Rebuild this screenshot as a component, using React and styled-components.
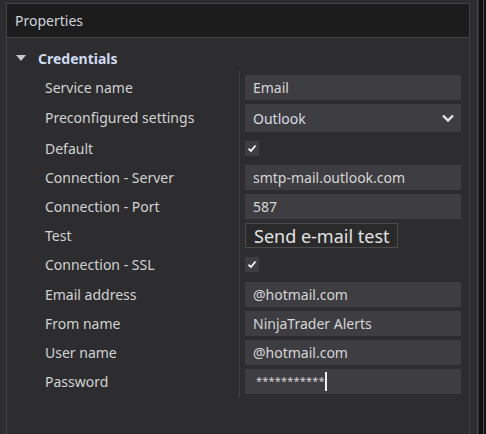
import React from "react";
import styled, { createGlobalStyle } from "styled-components";

const GlobalStyle = createGlobalStyle`
  html, body {
    margin: 0;
    padding: 0;
    background: #2d2d30;
  }
  * {
    box-sizing: border-box;
  }
`;

const Screen = styled.div`
  display: flex;
  width: 486px;
  height: 434px;
  padding-left: 6px;
  background: #2d2d30;
  font-family: "Noto Sans", "Open Sans", sans-serif;
  overflow: hidden;
`;

const Panel = styled.section`
  flex: 0 0 464px;
  margin-top: 3px;
  border: 1px solid #434346;
  border-bottom: none;
  background: #2d2d30;
`;

const PanelHeader = styled.header`
  height: 34px;
  padding-left: 8px;
  display: flex;
  align-items: center;
  background: #1c1c1d;
  border-bottom: 1px solid #434346;
  color: #cfd5de;
  font-size: 14px;
`;

const Section = styled.div`
  display: flex;
  align-items: center;
  gap: 12px;
  height: 20px;
  margin: 10px 0 7px;
  padding-left: 9px;
  color: #cfdaf0;
  font-size: 14px;
  font-weight: 700;
`;

const Triangle = styled.span`
  width: 0;
  height: 0;
  border-left: 5px solid transparent;
  border-right: 5px solid transparent;
  border-top: 6px solid #c8c8c8;
`;

const Grid = styled.div`
  display: grid;
  grid-template-columns: 232px 1fr;
  padding-top: 4px;
  margin-top: -4px;
  background: linear-gradient(#3f3f44, #3f3f44) 232px 0 / 1px 100% no-repeat;
`;

const Label = styled.div`
  height: ${(p) => p.$h}px;
  padding-left: 38px;
  line-height: ${(p) => (p.$tall ? 28 : 25)}px;
  color: #d2d2d2;
  font-size: 14px;
  white-space: nowrap;
`;

const Value = styled.div`
  height: ${(p) => p.$h}px;
  padding-left: 6px;
  display: flex;
  align-items: flex-start;
`;

const Input = styled.div`
  width: 216px;
  height: 25px;
  padding-left: 8px;
  display: flex;
  align-items: center;
  background: #3e3d42;
  color: #d6d6d6;
  font-size: 14px;
`;

const Select = styled(Input)`
  height: 28px;
  justify-content: space-between;
  padding-right: 6px;
  color: #d8dce4;
`;

const Check = styled.div`
  width: 14px;
  height: 15px;
  margin-top: 5px;
  display: flex;
  align-items: center;
  justify-content: center;
  background: #3e3d42;
`;

const Button = styled.div`
  height: 25px;
  padding: 0 7px 0 8px;
  display: flex;
  align-items: center;
  background: #2a2a2b;
  border: 1px solid #4b4b4e;
  color: #e2e2e2;
  font-size: 18px;
`;

const Stars = styled.span`
  margin-left: 3px;
  margin-top: -3px;
  font-size: 11px;
  letter-spacing: 0.2px;
  color: #d6d6d6;
`;

const Caret = styled.span`
  width: 2px;
  height: 19px;
  background: #f0f0f0;
`;

const Gutter = styled.div`
  flex: 0 0 7px;
`;

const EdgeLine = styled.div`
  flex: 0 0 ${(p) => p.$w}px;
  background: ${(p) => p.$c};
`;

const rows = [
  { label: "Service name", h: 29, kind: "text", value: "Email" },
  { label: "Preconfigured settings", h: 32, kind: "select", value: "Outlook" },
  { label: "Default", h: 29, kind: "check" },
  { label: "Connection - Server", h: 29, kind: "text", value: "smtp-mail.outlook.com" },
  { label: "Connection - Port", h: 29, kind: "text", value: "587" },
  { label: "Test", h: 29, kind: "button", value: "Send e-mail test" },
  { label: "Connection - SSL", h: 30, kind: "check" },
  { label: "Email address", h: 29, kind: "text", value: "@hotmail.com" },
  { label: "From name", h: 29, kind: "text", value: "NinjaTrader Alerts" },
  { label: "User name", h: 29, kind: "text", value: "@hotmail.com" },
  { label: "Password", h: 29, kind: "password", value: "***********" },
];

function Chevron() {
  return (
    <svg width="14" height="10" viewBox="0 0 14 10">
      <path d="M2 2.5 L7 7.5 L12 2.5" fill="none" stroke="#e6e6e6" strokeWidth="2.4" />
    </svg>
  );
}

function Tick() {
  return (
    <svg width="10" height="9" viewBox="0 0 10 9">
      <path d="M1.5 4.8 L4 7 L8.5 1.5" fill="none" stroke="#f2f2f2" strokeWidth="1.9" />
    </svg>
  );
}

function Field({ row }) {
  switch (row.kind) {
    case "select":
      return (
        <Select>
          {row.value}
          <Chevron />
        </Select>
      );
    case "check":
      return (
        <Check>
          <Tick />
        </Check>
      );
    case "button":
      return <Button>{row.value}</Button>;
    case "password":
      return (
        <Input>
          <Stars>{row.value}</Stars>
          <Caret />
        </Input>
      );
    default:
      return <Input>{row.value}</Input>;
  }
}

export default function App() {
  return (
    <>
      <GlobalStyle />
      <Screen>
        <Panel>
          <PanelHeader>Properties</PanelHeader>
          <Section>
            <Triangle />
            Credentials
          </Section>
          <Grid>
            {rows.map((row) => (
              <React.Fragment key={row.label}>
                <Label $h={row.h} $tall={row.kind === "select"}>
                  {row.label}
                </Label>
                <Value $h={row.h}>
                  <Field row={row} />
                </Value>
              </React.Fragment>
            ))}
          </Grid>
        </Panel>
        <Gutter />
        <EdgeLine $w={1} $c="#48484b" />
        <EdgeLine $w={1} $c="#2d2d30" />
        <EdgeLine $w={4} $c="#111112" />
        <EdgeLine $w={1} $c="#4e4e50" />
        <EdgeLine $w={2} $c="#111112" />
      </Screen>
    </>
  );
}
